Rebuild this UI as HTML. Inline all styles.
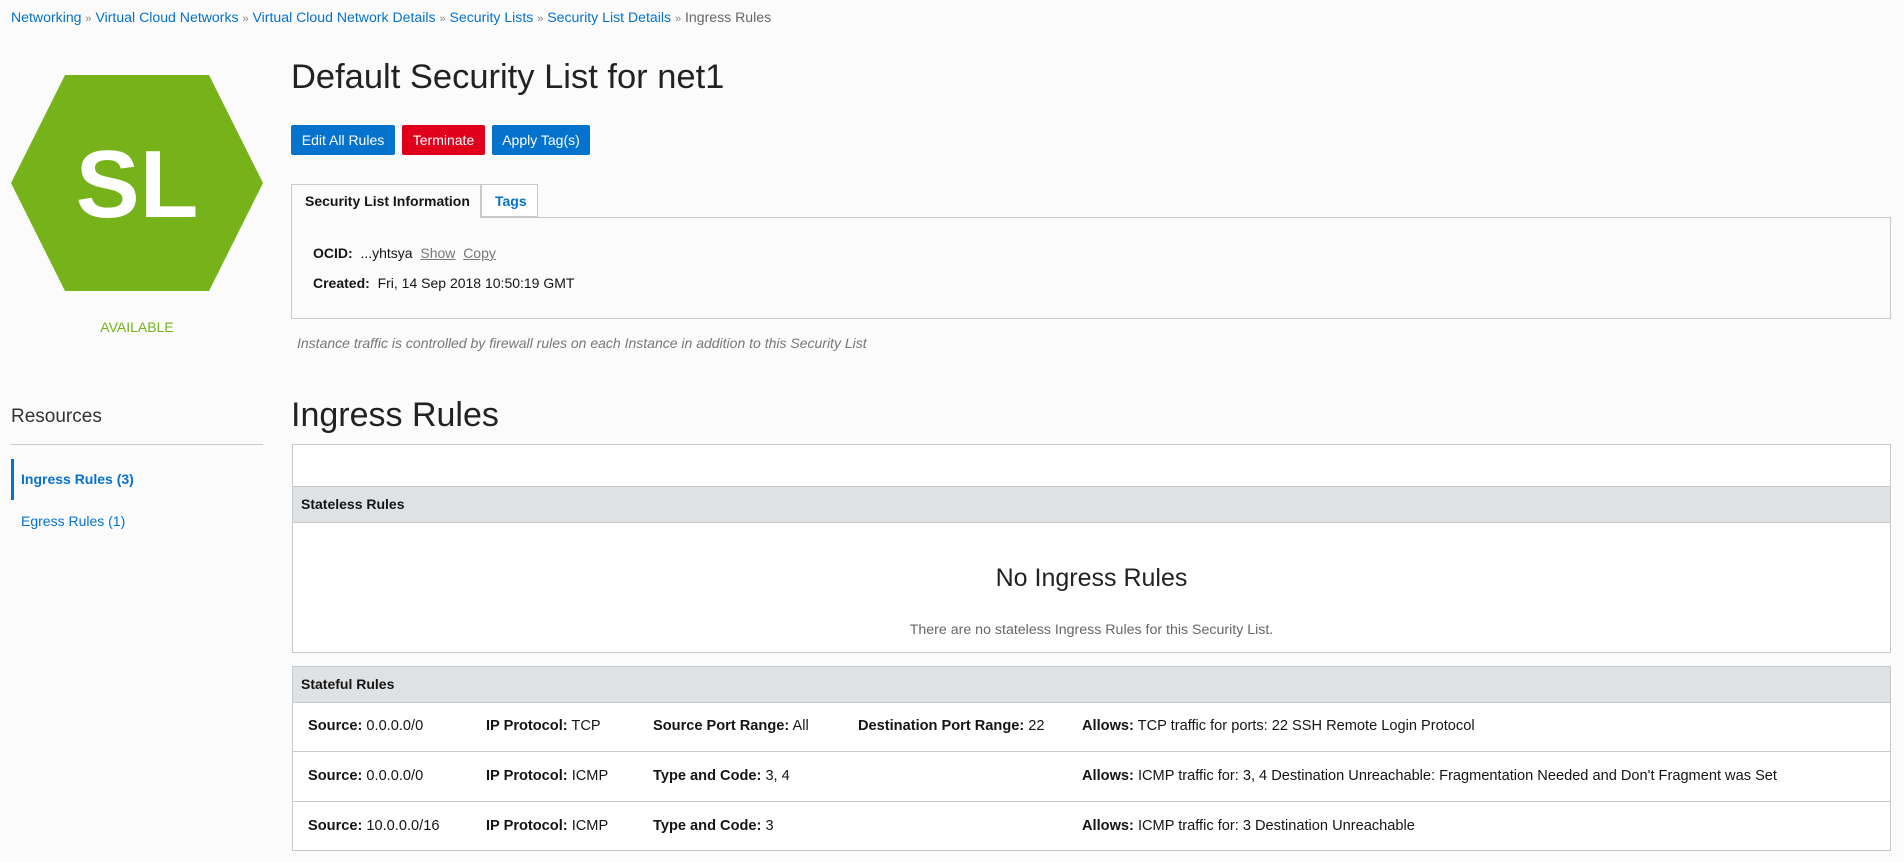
<!DOCTYPE html>
<html><head><meta charset="utf-8"><style>
*{box-sizing:border-box;margin:0;padding:0}
body{width:1904px;height:862px;background:#fbfbfb;font-family:"Liberation Sans",Arial,sans-serif;color:#161513;font-size:13px;position:relative;overflow:hidden}
.a{position:absolute;white-space:nowrap}
.blue{color:#0572ce}
.bc{left:11px;top:9px;font-size:14.1px;color:#0572ce}
.bc .s{color:#888;font-size:11px}
.bc .g{color:#666}
.btn{position:absolute;top:125px;height:30px;line-height:30px;color:#fff;font-size:14px;text-align:center;border-radius:2px}
.box{position:absolute;left:292px;width:1599px;border:1px solid #c7c9cc;background:#fff}
.hdr{position:absolute;left:0;right:0;background:#dfe2e5;border-top:1px solid #c7c9cc;border-bottom:1px solid #c7c9cc;font-weight:bold;font-size:14px;padding-left:8px}
.row{position:absolute;left:0;right:0;height:50px;border-bottom:1px solid #c7c9cc;font-size:14.6px}
.row span{position:absolute;top:16px;white-space:nowrap}
b{font-weight:bold}
</style></head><body>
<div class="a bc">Networking <span class="s">»</span> Virtual Cloud Networks <span class="s">»</span> Virtual Cloud Network Details <span class="s">»</span> Security Lists <span class="s">»</span> Security List Details <span class="s">»</span> <span class="g">Ingress Rules</span></div>

<svg class="a" style="left:11px;top:75px" width="252" height="216" viewBox="0 0 252 216"><polygon points="0,108 54,0 198,0 252,108 198,216 54,216" fill="#76b31b"/><text x="126" y="142" text-anchor="middle" fill="#fff" font-family="Liberation Sans,Arial,sans-serif" font-weight="bold" font-size="96">SL</text></svg>
<div class="a" style="left:0;width:274px;text-align:center;top:319px;color:#76b31b;font-size:14px">AVAILABLE</div>

<div class="a" style="left:291px;top:58px;font-size:34.5px;color:#222">Default Security List for net1</div>
<div class="btn" style="left:291px;width:104px;background:#0572ce">Edit All Rules</div>
<div class="btn" style="left:402px;width:83px;background:#e0001b">Terminate</div>
<div class="btn" style="left:492px;width:98px;background:#0572ce">Apply Tag(s)</div>

<div class="a" style="left:291px;top:217px;width:1600px;height:102px;border:1px solid #c7c9cc;background:#fbfbfb"></div>
<div class="a" style="left:291px;top:184px;width:190px;height:34px;border:1px solid #c7c9cc;border-bottom:none;background:#fbfbfb;font-weight:bold;font-size:14px;padding:8px 0 0 13px">Security List Information</div>
<div class="a" style="left:481px;top:184px;width:57px;height:33px;border:1px solid #c7c9cc;background:#fff;font-weight:bold;font-size:14px;padding:8px 0 0 13px;color:#0572ce">Tags</div>
<div class="a" style="left:313px;top:245px;font-size:14px"><b>OCID:</b>&nbsp; ...yhtsya&nbsp; <span style="color:#777;text-decoration:underline">Show</span>&nbsp; <span style="color:#777;text-decoration:underline">Copy</span></div>
<div class="a" style="left:313px;top:275px;font-size:14px"><b>Created:</b>&nbsp; Fri, 14 Sep 2018 10:50:19 GMT</div>
<div class="a" style="left:297px;top:335px;font-size:14px;font-style:italic;color:#777">Instance traffic is controlled by firewall rules on each Instance in addition to this Security List</div>

<div class="a" style="left:11px;top:406px;font-size:19px;color:#333">Resources</div>
<div class="a" style="left:11px;top:444px;width:252px;height:1px;background:#c7c9cc"></div>
<div class="a" style="left:11px;top:459px;width:3px;height:41px;background:#0572ce"></div>
<div class="a blue" style="left:21px;top:471px;font-weight:bold;font-size:14px">Ingress Rules (3)</div>
<div class="a blue" style="left:21px;top:513px;font-size:14px">Egress Rules (1)</div>

<div class="a" style="left:291px;top:396px;font-size:34px;color:#222">Ingress Rules</div>

<div class="box" style="top:444px;height:209px;">
<div class="hdr" style="top:41px;height:37px;line-height:35px">Stateless Rules</div>
<div class="a" style="left:0;right:0;top:119px;text-align:center;font-size:25px;color:#222">No Ingress Rules</div>
<div class="a" style="left:0;right:0;top:177px;text-align:center;font-size:14.2px;color:#666">There are no stateless Ingress Rules for this Security List.</div>
</div>

<div class="box" style="top:666px;height:185px;border-top:none">
<div class="hdr" style="top:0;height:37px;line-height:35px">Stateful Rules</div>
<div class="row" style="top:36px"><span style="left:15px"><b>Source:</b> 0.0.0.0/0</span><span style="left:193px"><b>IP Protocol:</b> TCP</span><span style="left:360px"><b>Source Port Range:</b> All</span><span style="left:565px"><b>Destination Port Range:</b> 22</span><span style="left:789px"><b>Allows:</b> TCP traffic for ports: 22 SSH Remote Login Protocol</span></div>
<div class="row" style="top:86px"><span style="left:15px"><b>Source:</b> 0.0.0.0/0</span><span style="left:193px"><b>IP Protocol:</b> ICMP</span><span style="left:360px"><b>Type and Code:</b> 3, 4</span><span style="left:789px"><b>Allows:</b> ICMP traffic for: 3, 4 Destination Unreachable: Fragmentation Needed and Don't Fragment was Set</span></div>
<div class="row" style="top:136px;border-bottom:none"><span style="left:15px"><b>Source:</b> 10.0.0.0/16</span><span style="left:193px"><b>IP Protocol:</b> ICMP</span><span style="left:360px"><b>Type and Code:</b> 3</span><span style="left:789px"><b>Allows:</b> ICMP traffic for: 3 Destination Unreachable</span></div>
</div>
</body></html>
